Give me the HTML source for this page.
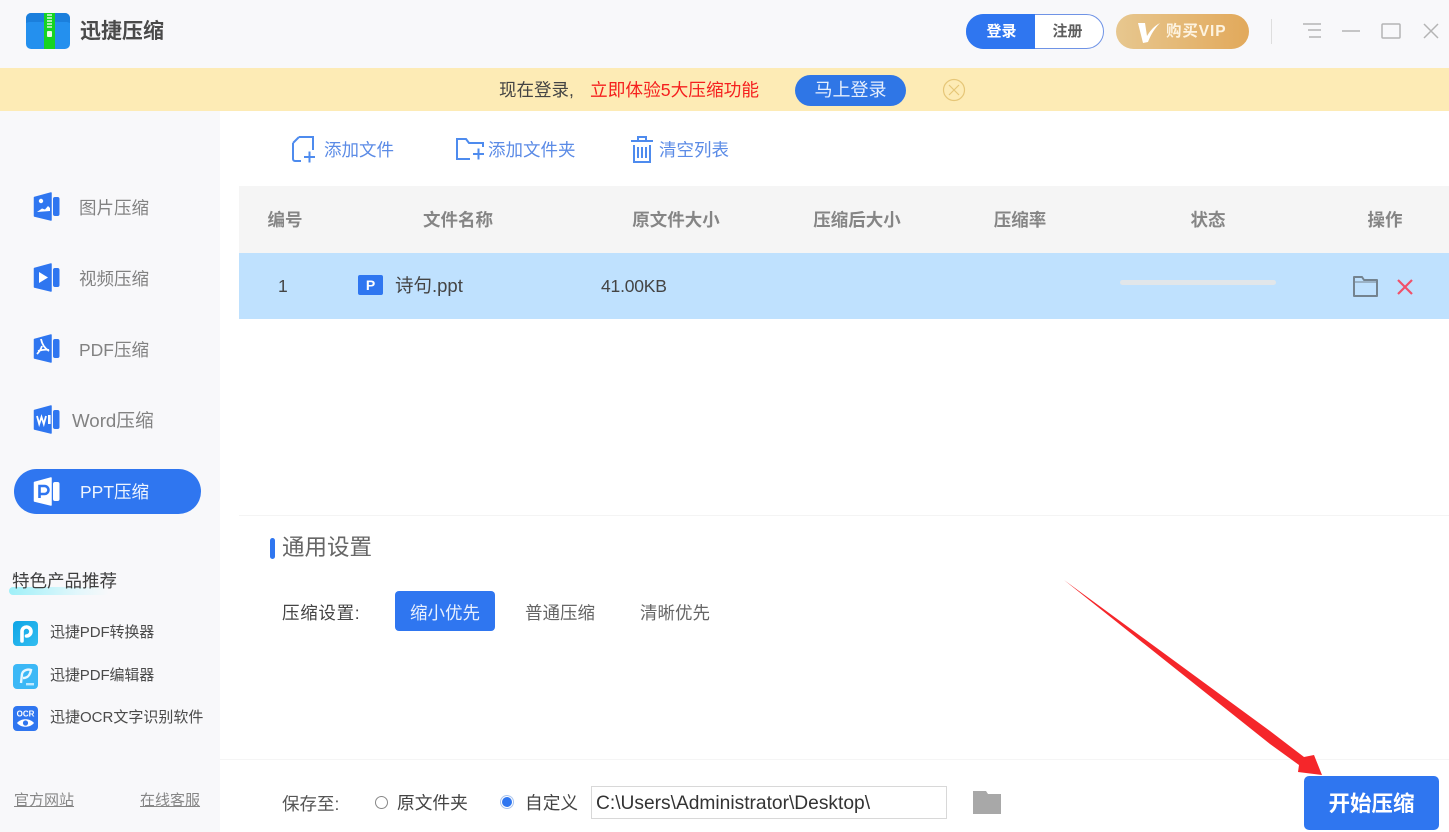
<!DOCTYPE html>
<html lang="zh-CN">
<head>
<meta charset="utf-8">
<title>迅捷压缩</title>
<style>
html,body{margin:0;padding:0;background:#fff}
body{width:1449px;height:832px;position:relative;overflow:hidden;font-family:"Liberation Sans","Noto Sans CJK SC",sans-serif;color:#555}
.a{position:absolute}
.t{position:absolute;white-space:nowrap;line-height:24px;height:24px}
svg{position:absolute;overflow:visible}
.nav{font-size:17.5px;color:#828282}
.th{font-size:17.5px;color:#858585;font-weight:700;text-align:center}
.tb{font-size:17.5px;color:#5b8be6}
.side{font-size:15px;color:#4a4a4a}
.ic{stroke-linejoin:round;stroke-width:1.5}
</style>
</head>
<body>
<!-- header -->
<div class="a" style="left:0;top:0;width:1449px;height:68px;background:#f8f8fa"></div>
<svg style="left:0;top:0" width="100" height="68">
<rect x="26" y="13" width="44" height="36" rx="5" fill="#2490ee"/>
<path d="M31 13h34a5 5 0 0 1 5 5v5l-3-1H29l-3 1v-5a5 5 0 0 1 5-5z" fill="#1b7fdc"/>
<rect x="44" y="13" width="11" height="36" fill="#16d422"/>
<path d="M47 15h5M47 18h5M47 21h5M47 24h5M47 27h5" stroke="#d8f8dc" stroke-width="1.6"/>
<rect x="47" y="31" width="5" height="6" rx="1" fill="#e8fbe9"/>
</svg>
<div class="t" style="left:80px;top:19px;font-size:21px;font-weight:700;color:#4a4a4a;line-height:26px;height:26px">迅捷压缩</div>

<div class="a" style="left:966px;top:14px;width:138px;height:35px;border-radius:18px;background:#fff;border:1px solid #6f93e6;box-sizing:border-box"></div>
<div class="a" style="left:966px;top:14px;width:69px;height:35px;border-radius:18px 0 0 18px;background:#2f76f0"></div>
<div class="t" style="left:967px;top:20px;width:69px;text-align:center;font-size:15px;font-weight:700;color:#fff">登录</div>
<div class="t" style="left:1035px;top:20px;width:65px;text-align:center;font-size:15px;font-weight:700;color:#5e5e5e">注册</div>

<div class="a" style="left:1116px;top:14px;width:133px;height:35px;border-radius:18px;background:linear-gradient(90deg,#e7c78f,#e2a95b)"></div>
<svg style="left:1116px;top:14px" width="133" height="35">
<path d="M22 9h7l2 13c3-5 7-10 13-13-5 5-9 11-12 19l-5 1z" fill="#fff"/>
</svg>
<div class="t" style="left:1166px;top:20px;font-size:15.5px;font-weight:700;color:#fdf3e0;letter-spacing:.9px">购买VIP</div>

<div class="a" style="left:1271px;top:19px;width:1px;height:25px;background:#dedede"></div>
<svg style="left:1300px;top:20px" width="140" height="24" fill="none" stroke="#b4b4b4" stroke-width="1.5">
<path d="M3 4h18M8 10h13M9 17h12"/>
<path d="M42 11h18"/>
<rect x="82" y="4" width="18" height="14" rx="1"/>
<path d="M124 4l14 14M138 4l-14 14"/>
</svg>

<!-- banner -->
<div class="a" style="left:0;top:68px;width:1449px;height:43px;background:#fdebb5"></div>
<div class="t" style="left:499px;top:78px;font-size:17.5px;color:#444">现在登录,</div>
<div class="t" style="left:590px;top:78px;font-size:17.7px;color:#f5201e">立即体验5大压缩功能</div>
<div class="a" style="left:795px;top:75px;width:111px;height:31px;border-radius:16px;background:#2f76e6"></div>
<div class="t" style="left:795px;top:78px;width:111px;text-align:center;font-size:18px;color:#e6effd">马上登录</div>
<svg style="left:942px;top:78px" width="24" height="24" fill="none" stroke="#e6c677" stroke-width="1.2">
<circle cx="12" cy="12" r="10.5"/><path d="M7 7l10 10M17 7L7 17"/>
</svg>

<!-- sidebar -->
<div class="a" style="left:0;top:111px;width:220px;height:721px;background:#f8f8fa"></div>
<div class="a" style="left:14px;top:469px;width:187px;height:45px;border-radius:23px;background:#2f76f0"></div>

<svg style="left:33px;top:192px" width="27" height="29">
<path class="ic" d="M1.5 5.5l16.5-4.500v27L1.500 24z" fill="#2f76f0" stroke="#2f76f0"/><rect x="20" y="5" width="6.500" height="19" rx="2" fill="#2f76f0"/>
<circle cx="8" cy="9" r="2.200" fill="#fff"/><path d="M4 20l5-3.500 3 1 3-3.500 2 2v3z" fill="#fff"/>
</svg>
<div class="t nav" style="left:79px;top:196px">图片压缩</div>

<svg style="left:33px;top:263px" width="27" height="29">
<path class="ic" d="M1.5 5.5l16.5-4.500v27L1.500 24z" fill="#2f76f0" stroke="#2f76f0"/><rect x="20" y="5" width="6.500" height="19" rx="2" fill="#2f76f0"/>
<path d="M6 9l9 5.500-9 5.500z" fill="#fff"/>
</svg>
<div class="t nav" style="left:79px;top:267px">视频压缩</div>

<svg style="left:33px;top:334px" width="27" height="29">
<path class="ic" d="M1.5 5.5l16.5-4.500v27L1.500 24z" fill="#2f76f0" stroke="#2f76f0"/><rect x="20" y="5" width="6.500" height="19" rx="2" fill="#2f76f0"/>
<path d="M8 5c1 5 3 9 8 12M9 12c-1 3-3 6-5 8M5 17c3-1 7-2 11-1" stroke="#fff" stroke-width="1.800" fill="none"/>
</svg>
<div class="t nav" style="left:79px;top:338px">PDF压缩</div>

<svg style="left:33px;top:405px" width="27" height="29">
<path class="ic" d="M1.5 5.5l16.5-4.500v27L1.500 24z" fill="#2f76f0" stroke="#2f76f0"/><rect x="20" y="5" width="6.500" height="19" rx="2" fill="#2f76f0"/>
<path d="M4 11l2.200 8 2.300-7 2.300 7 2.200-8" stroke="#fff" stroke-width="1.800" fill="none"/>
<rect x="15" y="10" width="2.600" height="9" fill="#fff"/>
</svg>
<div class="t nav" style="left:72px;top:409px;font-size:18.7px">Word压缩</div>

<svg style="left:33px;top:477px" width="27" height="29">
<path class="ic" d="M1.5 5.5l16.5-4.500v27L1.500 24z" fill="#fff" stroke="#fff"/><rect x="20" y="5" width="6.500" height="19" rx="2" fill="#fff"/>
<path d="M6.500 21V9h5a3.500 3.500 0 0 1 0 8h-5" stroke="#2f76f0" stroke-width="2.600" fill="none"/>
</svg>
<div class="t nav" style="left:80px;top:480px;color:#eef4fe">PPT压缩</div>

<div class="a" style="left:9px;top:587px;width:100px;height:8px;border-radius:4px;background:linear-gradient(90deg,#9ff0f8,#e3f7fb 70%,#f8f8fa)"></div>
<div class="t" style="left:12px;top:569px;font-size:17.5px;color:#3d3d3d">特色产品推荐</div>

<svg style="left:13px;top:621px" width="25" height="25">
<defs><linearGradient id="g1" x1="0" y1="0" x2="1" y2="1"><stop offset="0" stop-color="#0ea5e6"/><stop offset="1" stop-color="#33bdf0"/></linearGradient></defs>
<rect width="25" height="25" rx="4" fill="url(#g1)"/>
<path d="M9 20V10a4.500 4.500 0 1 1 4.500 5" stroke="#fff" stroke-width="3.600" fill="none" stroke-linecap="round"/>
</svg>
<div class="t side" style="left:50px;top:621px;letter-spacing:-.1px">迅捷PDF转换器</div>

<svg style="left:13px;top:664px" width="25" height="25">
<rect width="25" height="25" rx="4" fill="#3cb8f6"/>
<path d="M8 19l1-9c1-4 6-5 9-4-1 5-3 8-8 8" stroke="#e8f7ff" stroke-width="2.400" fill="none"/>
<rect x="13" y="19" width="8" height="2.400" fill="#bfe9ff"/>
</svg>
<div class="t side" style="left:50px;top:664px;letter-spacing:-.1px">迅捷PDF编辑器</div>

<svg style="left:13px;top:706px" width="25" height="25">
<rect width="25" height="25" rx="4" fill="#2f76f0"/>
<text x="12.500" y="10.500" font-size="8" font-weight="700" fill="#fff" text-anchor="middle" font-family="Liberation Sans">OCR</text>
<path d="M4 17c4-5 13-5 17 0-4 5-13 5-17 0z" fill="#fff"/><circle cx="12.500" cy="17" r="2.600" fill="#2f76f0"/>
</svg>
<div class="t side" style="left:50px;top:706px">迅捷OCR文字识别软件</div>

<div class="t" style="left:14px;top:789px;font-size:15px;color:#868686;text-decoration:underline">官方网站</div>
<div class="t" style="left:140px;top:789px;font-size:15px;color:#868686;text-decoration:underline">在线客服</div>

<!-- toolbar -->
<svg style="left:291px;top:134px" width="26" height="30" fill="none" stroke="#4e8bee" stroke-width="2">
<path d="M8 3h14v13M2 9v16a2 2 0 0 0 2 2h6M2 9l6-6"/>
<path d="M13 23h11M18.500 17.500v11"/>
</svg>
<div class="t tb" style="left:324px;top:138px">添加文件</div>
<svg style="left:456px;top:136px" width="30" height="26" fill="none" stroke="#4e8bee" stroke-width="2">
<path d="M27 11V7H13L10 3H1v20h13"/>
<path d="M17 18h11M22.500 12.500v11"/>
</svg>
<div class="t tb" style="left:488px;top:138px">添加文件夹</div>
<svg style="left:631px;top:135px" width="24" height="28" fill="none" stroke="#4e8bee" stroke-width="2">
<path d="M0 6h22M7 5V2h8v3M3 10v17h16V10M7 12v11M11 12v11M15 12v11"/>
</svg>
<div class="t tb" style="left:659px;top:138px">清空列表</div>

<!-- table -->
<div class="a" style="left:239px;top:186px;width:1210px;height:67px;background:#f5f5f5"></div>
<div class="t th" style="left:255px;top:208px;width:60px">编号</div>
<div class="t th" style="left:408px;top:208px;width:100px">文件名称</div>
<div class="t th" style="left:616px;top:208px;width:120px">原文件大小</div>
<div class="t th" style="left:797px;top:208px;width:120px">压缩后大小</div>
<div class="t th" style="left:980px;top:208px;width:80px">压缩率</div>
<div class="t th" style="left:1178px;top:208px;width:60px">状态</div>
<div class="t th" style="left:1355px;top:208px;width:60px">操作</div>

<div class="a" style="left:239px;top:253px;width:1210px;height:66px;background:#bfe1fe"></div>
<div class="t" style="left:278px;top:274px;font-size:17.5px;color:#444">1</div>
<div class="a" style="left:358px;top:275px;width:25px;height:20px;border-radius:2px;background:#2f76f0"></div>
<div class="t" style="left:358px;top:273px;width:25px;text-align:center;font-size:14px;font-weight:700;color:#fff">P</div>
<div class="t" style="left:395px;top:274px;font-size:18.5px;color:#444">诗句.ppt</div>
<div class="t" style="left:601px;top:274px;font-size:17.5px;color:#444;letter-spacing:-.2px">41.00KB</div>
<div class="a" style="left:1120px;top:280px;width:156px;height:5px;border-radius:3px;background:#e1e6ea"></div>
<svg style="left:1352px;top:275px" width="28" height="24" fill="none" stroke="#74838f" stroke-width="2" stroke-linejoin="round">
<path d="M2 21V2h8l2 3h13v16z"/><path d="M2 7h23" stroke-width="1"/>
</svg>
<svg style="left:1397px;top:279px" width="16" height="16" fill="none" stroke="#f0506a" stroke-width="2.200">
<path d="M1 1l14 14M15 1L1 15"/>
</svg>

<!-- settings -->
<div class="a" style="left:239px;top:515px;width:1210px;height:1px;background:#f4f4f4"></div>
<div class="a" style="left:270px;top:538px;width:5px;height:21px;border-radius:3px;background:#2f76f0"></div>
<div class="t" style="left:282px;top:536px;font-size:22.5px;color:#666">通用设置</div>
<div class="t" style="left:282px;top:601px;font-size:17.5px;color:#444;letter-spacing:.7px">压缩设置:</div>
<div class="a" style="left:395px;top:591px;width:100px;height:40px;border-radius:4px;background:#2f76f0"></div>
<div class="t" style="left:395px;top:601px;width:100px;text-align:center;font-size:17.5px;color:#e8f0fe">缩小优先</div>
<div class="t" style="left:525px;top:601px;font-size:17.5px;color:#666">普通压缩</div>
<div class="t" style="left:640px;top:601px;font-size:17.5px;color:#666">清晰优先</div>

<!-- bottom -->
<div class="a" style="left:220px;top:759px;width:1229px;height:1px;background:#f5f5f5"></div>
<div class="t" style="left:282px;top:792px;font-size:17.5px;color:#555">保存至:</div>
<div class="a" style="left:375px;top:796px;width:13px;height:13px;border:1px solid #888;border-radius:50%;box-sizing:border-box;background:#fff"></div>
<div class="t" style="left:397px;top:791px;font-size:17.7px;color:#444">原文件夹</div>
<div class="a" style="left:500px;top:795px;width:14px;height:14px;border:1px solid #a9c4ee;border-radius:50%;box-sizing:border-box;background:#fff"></div>
<div class="a" style="left:502px;top:797px;width:10px;height:10px;border-radius:50%;background:#2f76f0"></div>
<div class="t" style="left:525px;top:791px;font-size:17.7px;color:#444">自定义</div>
<div class="a" style="left:591px;top:786px;width:356px;height:33px;border:1px solid #d8d8d8;box-sizing:border-box;background:#fff"></div>
<div class="t" style="left:596px;top:792px;font-size:19.2px;color:#333">C:\Users\Administrator\Desktop\</div>
<svg style="left:973px;top:791px" width="28" height="23">
<path d="M0 0h13l2 3h13v20H0z" fill="#a8a8a8"/>
</svg>

<div class="a" style="left:1304px;top:776px;width:135px;height:54px;border-radius:5px;background:#2f76f0"></div>
<div class="t" style="left:1304px;top:792px;width:135px;text-align:center;font-size:21.5px;font-weight:700;color:#fff">开始压缩</div>

<!-- arrow -->
<svg style="left:0;top:0" width="1449" height="832">
<polygon points="1064,580 1270,731 1304,757 1314,755 1322,775 1298,772 1299,765 1270,744" fill="#f5262a"/>
</svg>
</body>
</html>
